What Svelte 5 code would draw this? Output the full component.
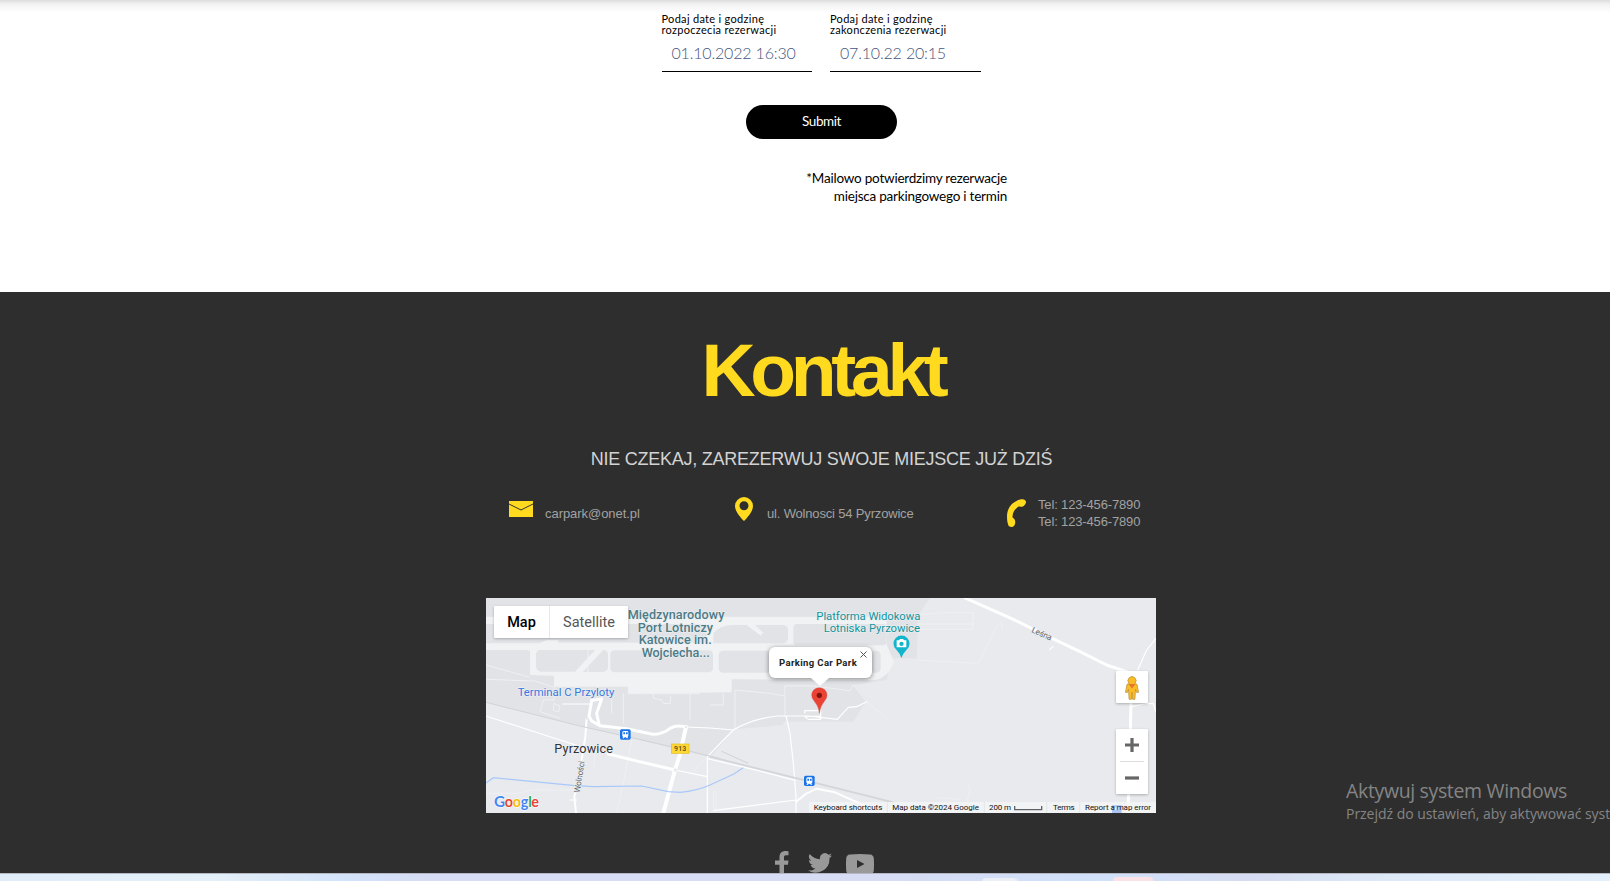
<script>
  const fields = [
    { label: ['Podaj date i godzinę', 'rozpoczecia rezerwacji'], value: '01.10.2022 16:30' },
    { label: ['Podaj date i godzinę', 'zakonczenia rezerwacji'], value: '07.10.22 20:15' }
  ];
  const port = [
    ['Międzynarodowy', 443, 733, 87],
    ['Port Lotniczy', 473, 699, 125],
    ['Katowice im.', 476, 695, 163],
    ['Wojciecha...', 485, 689, 202]
  ];
  const footer = [
    ['Keyboard shortcuts', 1001, 1207],
    ['Map data ©2024 Google', 1237, 1497],
    ['200 m', 1527, 1593],
    ['Terms', 1719, 1784],
    ['Report a map error', 1815, 2013]
  ];
  const google = [
    ['G', '#4285f4', 42], ['o', '#ea4335', 74], ['o', '#fbbc04', 98],
    ['g', '#4285f4', 122], ['l', '#34a853', 145], ['e', '#ea4335', 154]
  ];
</script>

<div class="page">
  <section class="booking">
    <div class="fields">
      {#each fields as field}
        <div class="field">
          <div class="label">{field.label[0]}<br />{field.label[1]}</div>
          <div class="value">{field.value}</div>
        </div>
      {/each}
    </div>
    <button class="submit">Submit</button>
    <p class="note">*Mailowo potwierdzimy rezerwacje<br />miejsca parkingowego i termin</p>
  </section>

  <section class="contact">
    <h2>Kontakt</h2>
    <p class="lead">NIE CZEKAJ, ZAREZERWUJ SWOJE MIEJSCE JUŻ DZIŚ</p>
    <div class="details">
      <div class="item mail">
        <svg width="24" height="16" viewBox="0 0 24 16"><path fill="#ffda1f" d="M0 0h24v2.600L12 8.400 0 2.600zM0 3.500l12 5.900L24 3.500V16H0z" /></svg>
        <span>carpark@onet.pl</span>
      </div>
      <div class="item place">
        <svg width="18" height="24" viewBox="0 0 18 24"><path fill="#ffda1f" fill-rule="evenodd" d="M9 0a9 9 0 0 1 9 9c0 5-5 11-9 15C5 20 0 14 0 9a9 9 0 0 1 9-9zm0 4.200a4.500 4.500 0 1 0 0 9 4.500 4.500 0 0 0 0-9z" /></svg>
        <span>ul. Wolnosci 54 Pyrzowice</span>
      </div>
      <div class="item phone">
        <svg width="20" height="28" viewBox="0 0 20 28"><path fill="#ffda1f" d="M14 .3C5.500 2.200 0 8.500 0 17.500c0 4 .5 7 1.500 9 1 2 4.800 2 6-.3 1.300-2.300 1-5.400-1-6.900-.6-.4-1-.7-1-1.500.1-4.500 2.500-8 6-10.200.7-.4 1.200-.2 1.800.1 2.500.8 5.700-2.200 5.700-4.700C19 .7 16.500-.3 14 .3z" /></svg>
        <span>Tel: 123-456-7890<br />Tel: 123-456-7890</span>
      </div>
    </div>

    <div class="map">
      <svg class="canvas" width="670" height="215" viewBox="18 24 2010 645">
        <rect x="18" y="24" width="2010" height="645" fill="#e8eaed" />
        <path fill="#e1e3e7" d="M18 24H1350L1315 75 1310 205H1235L1220 270 1120 285 1160 330 1120 395H910V405L765 418 690 502 18 337z" />
        <path fill="#f0f2f4" d="M18 80H1220V165L1242 215Q1225 262 1185 270L755 268V307L445 311V290H222V257L150 255V182H18z" />
        <g fill="#e1e3e7">
          <path d="M18 102H680V158H235V150H200L180 160H18z" />
          <path d="M700 160V130Q720 105 760 105H800L842 137 850 128 825 105H910Q924 107 924 120V147Q922 160 905 160z" />
          <rect x="940" y="102" width="280" height="64" rx="12" />
          <path d="M18 180H140Q150 182 150 192V255H18z" />
          <path d="M178 180H345L285 245H182Q168 243 168 228V194Q168 184 178 180zM370 180H374Q384 184 384 194V232Q382 245 368 246H308z" />
          <rect x="391" y="181" width="308" height="66" rx="13" /><rect x="716" y="182" width="486" height="66" rx="13" />
        </g>
        <g fill="none" stroke="#eff0f3" stroke-width="3">
          <path d="M18 225L150 262M18 268L165 273 222 292V330H190L180 365 240 385M222 340L240 348 236 366 220 360zM445 290V311H660M430 310V400M630 311V390M520 311V325L545 330 550 340 570 341 572 318M395 328V370M324 180V270M690 345H730V311" />
          <path d="M765 418V300L870 310 915 318 914 288H1000L1110 302 1120 285 1160 335M915 318V380M1310 102H1479V68H1400L1315 74M1310 118H1479V102M1310 210L1495 220 1555 100M1565 95L1567 120M1465 585L1470 600 1460 640M1370 622L1440 628M18 610H120L150 600H280M700 605V655L708 656V605z" />
          <path d="M1160 335L1225 390M455 450L430 580 410 669M345 490L340 530M682 500L640 545" />
        </g>
        <g fill="none" stroke="#fff" stroke-linejoin="round" stroke-linecap="round">
          <path stroke-width="3.500" d="M18 378L240 450 360 488M618 411L690 414 760 420Q820 385 895 378H985L1072 388 1105 352 1130 350 1160 335M974 369V362H1022V388H985L974 379H1022M682 500L760 420M682 500V669M682 506L820 538 945 571M585 540L682 560M918 378L930 430 940 520 948 620V669M948 630L700 662M1719 170L1709 179M1973 240L2000 180 2028 145M1955 350L2000 340 2020 341 2028 365M270 630H290M248 342H335" />
          <path stroke-width="6" d="M320 385L316 440 300 540 283 620 288 669M948 635L980 610 1010 596 1065 607 1120 632 1170 652" />
          <path stroke-width="9" d="M365 327L335 331 327 378 335 393 360 407 440 416 515 432Q545 435 570 415 590 404 618 411M365 327L350 370 357 402M385 492L475 514 585 540" />
          <path stroke-width="12" d="M618 411L598 500 585 540 550 669" />
          <path stroke-width="9" d="M1455 24L1560 70 1600 88 1680 128 1800 185 1880 225 1955 250 1951 430 1944 669" />
        </g>
        <circle cx="586" cy="540" r="5" fill="#e8eaed" /><circle cx="618" cy="411" r="4" fill="#e8eaed" /><circle cx="320" cy="385" r="4" fill="#e8eaed" />
        <path fill="none" stroke="#d0d2d6" stroke-width="3" d="M18 337L300 408 500 453 660 491 720 506M725 484L805 520" />
        <path fill="none" stroke="#d3d5d8" stroke-width="5" d="M690 500L830 535 1060 592 1240 637" />
        <path fill="none" stroke="#a8c8fa" stroke-width="3.500" d="M18 579L40 563 285 587 340 590 485 588 565 605 600 607Q650 603 690 585L760 553 790 533" />

        <g class="halo">
          {#each port as [text, from, to, y]}
            <text x={from} {y} font-size="38" font-weight="500" fill="#4c7b86" textLength={to - from}>{text}</text>
          {/each}
          <g fill="#12949c" font-size="34">
            <text x="1009" y="91" textLength="312">Platforma Widokowa</text>
            <text x="1031" y="125" textLength="289">Lotniska Pyrzowice</text>
          </g>
          <text x="113" y="319" font-size="34" fill="#3777dc" textLength="290">Terminal C Przyloty</text>
          <text x="223" y="488" font-size="38" fill="#303338" textLength="176">Pyrzowice</text>
          <text transform="translate(299 609) rotate(-81)" font-size="25" fill="#60656b" textLength="96">Wolności</text>
          <text transform="translate(1653 126) rotate(24)" font-size="25" fill="#60656b" textLength="64">Leśna</text>
        </g>
        <rect x="574" y="462" width="53" height="28" fill="#fdd835" stroke="#e5bd20" stroke-width="2" />
        <text x="582" y="484" font-size="21" font-weight="500" fill="#554a20" textLength="37">913</text>

        {#each [[420, 418], [972, 557]] as [x, y]}
          <g transform="translate({x} {y})">
            <rect width="32" height="31" rx="5" fill="#1a73e8" />
            <path fill="#fff" fill-rule="evenodd" d="M7 9Q7 5 12 5H20Q25 5 25 9V20Q25 22 22 23L25 27H20L18 24H14L12 27H7L10 23Q7 22 7 20zM10 9V15H15V9zM18 9V15H23V9z" />
          </g>
        {/each}

        <path fill="#12b5cb" d="M1264 204Q1261 192 1248 178A24 24 0 1 1 1281 178Q1268 192 1264 204z" />
        <path fill="#fff" fill-rule="evenodd" d="M1250 151H1257L1260 147H1269L1272 151H1279V172H1250zM1264.500 155A6 6 0 1 0 1264.500 168A6 6 0 1 0 1264.500 155z" />
        <path fill="#ea4335" stroke="#c5372c" stroke-width="1" d="M1018 370Q1017 350 1003 334 995 326 995 315A23 22 0 0 1 1041 315Q1041 326 1033 334 1020 350 1018 370z" />
        <circle cx="1018" cy="316" r="8" fill="#811411" />

        {#each google as [letter, color, x]}
          <text class="google" {x} y="650" fill={color} font-size={letter === 'G' ? 46 : 43}>{letter}</text>
        {/each}
        <rect x="987" y="636" width="1041" height="33" fill="#f5f5f5" opacity=".75" />
        <path stroke="#dde0e3" stroke-width="2" d="M1222 636V669M1513 636V669M1700 636V669M1799 636V669" />
        <path fill="#85aaf0" d="M1896 646H1925V669H1896zM1903 652V660H1909V652zM1912 652V660H1918V652z" fill-rule="evenodd" opacity=".65" />
        {#each footer as [text, from, to]}
          <text x={from} y="660" font-size="24" fill="#111" textLength={to - from}>{text}</text>
        {/each}
        <path d="M1604 648V659H1685V648" fill="none" stroke="#606366" stroke-width="4" />
      </svg>

      <div class="switch"><span class="active">Map</span><span>Satellite</span></div>
      <div class="popup">
        <span>Parking Car Park</span>
        <svg width="7" height="7" viewBox="0 0 7 7"><path stroke="#555" d="M.5.5l6 6m0-6l-6 6" /></svg>
      </div>
      <div class="pegman">
        <svg width="14" height="25" viewBox="0 0 14 25"><path fill="#fbbc28" stroke="#b58b35" stroke-width=".7" d="M4.200 8.500a4 4 0 1 1 5.600 0l2.200.8 1.500 8-1.800.2-1.200-3-.6 9.800H7.600L7 17l-.6 7.300H4.100l-.6-9.800-1.200 3-1.800-.2 1.500-8z" /><path fill="#e4772c" d="M3.500 9h7L7 13.500z" /></svg>
      </div>
      <div class="zoom">
        <svg width="14" height="32" viewBox="0 0 14 32"><path stroke="#666" stroke-width="3.200" d="M0 16h14M7 9v14" /></svg>
        <i></i>
        <svg width="14" height="32" viewBox="0 0 14 32"><path stroke="#666" stroke-width="3.200" d="M0 16h14" /></svg>
      </div>
    </div>

    <div class="social">
      <svg width="14" height="25" viewBox="0 0 14 25"><path fill="#999" d="M13.500.2v4H11c-1.600 0-2 .8-2 2v3.300h4.500L13 13.800H9V25H4.500V13.800H0V9.500h4.500V6C4.500 2 7 0 10.500 0z" /></svg>
      <svg width="24" height="20" viewBox="0 0 24 20"><path fill="#999" d="M24 2.400a10 10 0 0 1-2.600.8A5 5 0 0 0 23.500.5a9 9 0 0 1-3 1.200A5 5 0 0 0 12 6.200 14 14 0 0 1 1.700 1a5 5 0 0 0 1.500 6.600A5 5 0 0 1 1 7a5 5 0 0 0 4 4.900 5 5 0 0 1-2.300.1 5 5 0 0 0 4.700 3.400A10 10 0 0 1 0 17.500 14 14 0 0 0 21.500 5 10 10 0 0 0 24 2.400z" /></svg>
      <svg width="28" height="21" viewBox="0 0 28 21"><path fill="#999" fill-rule="evenodd" d="M4 .4Q14-.4 24 .4q3.500.3 3.800 4 .4 6 0 12-.3 3.600-3.800 4-10 .7-20 0-3.500-.3-3.800-4-.4-6 0-12Q.5.700 4 .4zM11 6v8l7.500-4z" /></svg>
    </div>
    <div class="watermark">
      <div class="title">Aktywuj system Windows</div>
      <div class="hint">Przejdź do ustawień, aby aktywować syst</div>
    </div>
  </section>
  <div class="taskbar"><i class="tile white"></i><i class="tile pink"></i></div>
</div>

<style>
  :global(body) { margin: 0; background: #fff; }
  .page { width: 1610px; height: 881px; overflow: hidden; display: flex; flex-direction: column; font-family: "Liberation Sans", Arial, sans-serif; }
  .page svg { display: block; flex: none; }
  .booking { height: 292px; box-sizing: border-box; flex: none; padding-top: 13px; display: flex; flex-direction: column; align-items: center; background: linear-gradient(#dcdcdc, #f2f2f2 4px, #fff 13px); font-family: Lato, sans-serif; color: #000; }
  .fields { display: flex; gap: 18px; margin-left: 32px; }
  .field { width: 150.500px; height: 59px; box-sizing: border-box; border-bottom: 1px solid #000; }
  .label { font-size: 11px; line-height: 11px; letter-spacing: .3px; white-space: nowrap; }
  .value { margin: 8px 0 0 10px; font-size: 16px; line-height: 20px; font-weight: 300; letter-spacing: -.18px; color: #46557c; white-space: nowrap; }
  .submit { width: 151px; height: 34px; margin: 33px 0 0 33px; padding: 0 0 1px; border: 0; border-radius: 17px; background: #000; color: #fff; font: 13.500px/33px Lato, sans-serif; letter-spacing: -.4px; }
  .note { width: 300px; margin: 30px 0 0 104px; text-align: right; font-size: 13.500px; line-height: 18px; letter-spacing: -.22px; }
  .contact { position: relative; height: 581px; flex: none; background: #2e2e2e; display: flex; flex-direction: column; align-items: center; overflow: hidden; }
  h2 { margin: 34px 0 0 35px; color: #ffda1f; font-size: 75px; line-height: 88px; letter-spacing: -5.300px; }
  .lead { margin: 34px 0 0 33px; height: 22px; font-size: 18px; line-height: 22px; letter-spacing: -.25px; color: #d3d3d3; white-space: nowrap; }
  .details { width: 632px; margin: 26px 0 0 40px; height: 38px; display: grid; grid-template-columns: 226px 272px auto; color: #a2a2a2; font-size: 13px; line-height: 17px; letter-spacing: -.05px; }
  .item { display: flex; align-items: flex-start; white-space: nowrap; }
  .mail { gap: 12px; padding-top: 5px; }
  .mail span { padding-top: 4px; }
  .place { gap: 14px; padding-top: 1px; letter-spacing: -.17px; }
  .place span { padding-top: 8px; }
  .phone { gap: 11px; letter-spacing: -.15px; }
  .phone svg { margin-top: 3px; }
  .map { position: relative; width: 670px; height: 215px; margin: 64px 0 0 32px; flex: none; font-family: Roboto, sans-serif; overflow: hidden; }
  .halo text { paint-order: stroke; stroke: #eceef1; stroke-width: 4px; stroke-linejoin: round; }
  .google { font-family: Lato, sans-serif; font-weight: 700; stroke: #fff; stroke-width: 3px; paint-order: stroke; }
  .switch { position: absolute; left: 8px; top: 8px; height: 32px; display: flex; background: #fff; box-shadow: 0 1px 3px #0004; font-size: 14.500px; line-height: 33px; color: #565656; border-radius: 1px; }
  .switch span { width: 78px; text-align: center; }
  .switch .active { width: 55px; border-right: 1px solid #e8e8e8; color: #000; font-weight: 500; }
  .popup { position: absolute; left: 283px; top: 49px; width: 103px; height: 31px; border-radius: 6px; background: #fff; box-shadow: 0 1px 5px #0007; font: 700 9.500px/31px Roboto, sans-serif; color: #222; }
  .popup span { margin-left: 10px; letter-spacing: .37px; white-space: nowrap; }
  .popup svg { position: absolute; right: 5px; top: 4px; }
  .popup::after { content: ""; position: absolute; left: 42px; top: 31px; border: 9px solid transparent; border-top: 8px solid #fff; border-bottom: 0; }
  .pegman, .zoom { position: absolute; right: 8px; width: 32px; background: #fff; box-shadow: 0 1px 3px #0004; border-radius: 1px; display: flex; flex-direction: column; align-items: center; }
  .pegman { top: 73px; height: 32px; justify-content: center; }
  .zoom { top: 131px; height: 65px; }
  .zoom i { width: 24px; height: 1px; background: #ddd; }
  .social { display: flex; align-items: flex-start; margin: 38px 0 0 38px; gap: 20px; height: 22px; }
  .social svg:nth-child(2) { margin: 2px 0 0 -1px; }
  .social svg:nth-child(3) { margin: 3px 0 0 -6px; }
  .watermark { position: absolute; left: 1346px; top: 485px; width: 264px; overflow: hidden; white-space: nowrap; color: #858585; font-family: "Open Sans", "Noto Sans", sans-serif; }
  .title { font-size: 19.500px; line-height: 27px; letter-spacing: -.35px; }
  .hint { font-size: 14px; line-height: 20px; letter-spacing: -.03px; }
  .taskbar { position: relative; height: 8px; flex: none; box-sizing: border-box; border-top: 1px solid #b5b8c2; background: linear-gradient(90deg, #e0ecf8, #e4f0f8 210px, #d3e3fa 340px, #d6dcf4 430px, #d5dcf3 900px, #d1e1fa 1100px, #d6dcf2 1250px, #deeaf8 1400px, #e3effa); }
  .tile { position: absolute; top: 4px; height: 8px; border-radius: 4px; }
  .white { left: 982px; width: 34px; background: #edeff7; box-shadow: 3px 0 0 #e3e8f5; }
  .pink { left: 1113px; width: 40px; top: 3px; background: #fbe2e7; }
</style>
